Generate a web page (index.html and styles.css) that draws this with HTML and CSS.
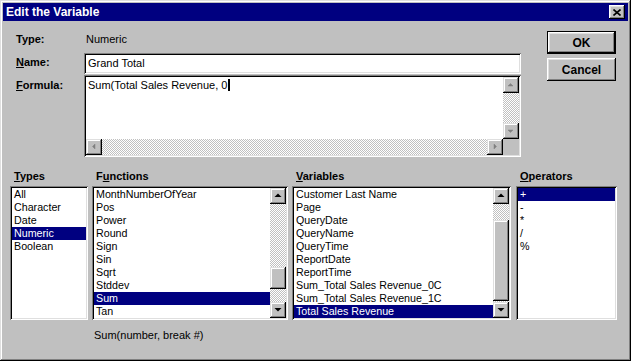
FILE: index.html
```html
<!DOCTYPE html>
<html lang="en">
<head>
	<meta charset="UTF-8">
	<title>Edit the Variable</title>
	<link rel="stylesheet" href="styles.css">
</head>
<body>
	<div class="window">
		<div class="titlebar">
			<span class="title">Edit the Variable</span>
			<span class="close">
				<svg width="8" height="7" viewBox="0 0 8 7"><path d="M0.5 0.5 L7.5 6.5 M7.5 0.5 L0.5 6.5" stroke="#000" stroke-width="1.6" fill="none"/></svg>
			</span>
		</div>

		<div class="top">
			<div class="fields">
				<div class="row type-row">
					<span class="label">Type:</span>
					<span class="value">Numeric</span>
				</div>
				<div class="row name-row">
					<span class="label"><u>N</u>ame:</span>
					<div class="sunken name-field">Grand Total</div>
				</div>
				<div class="row formula-row">
					<span class="label"><u>F</u>ormula:</span>
					<div class="sunken formula-field">
						<div class="formula-body">
							<div class="formula-text">Sum(Total Sales Revenue, 0<span class="caret"></span></div>
							<div class="vscroll">
								<span class="arrow raised"><svg width="16" height="16"><polygon points="5,9 10,9 7.5,6.5" class="dis"/></svg></span>
								<span class="track"></span>
								<span class="arrow raised"><svg width="16" height="16"><polygon points="5,7 10,7 7.5,9.5" class="dis"/></svg></span>
							</div>
						</div>
						<div class="hscroll">
							<span class="arrow raised"><svg width="16" height="16"><polygon points="9,5 9,10 6.5,7.5" class="dis"/></svg></span>
							<span class="track"></span>
							<span class="arrow raised"><svg width="16" height="16"><polygon points="7,5 7,10 9.5,7.5" class="dis"/></svg></span>
							<span class="corner"></span>
						</div>
					</div>
				</div>
			</div>
			<div class="buttons">
				<span class="btn default">OK</span>
				<span class="btn">Cancel</span>
			</div>
		</div>

		<div class="lists">
			<div class="col col-types">
				<div class="col-head"><u>T</u>ypes</div>
				<div class="sunken listbox">
					<ul class="items">
						<li>All</li>
						<li>Character</li>
						<li>Date</li>
						<li class="sel">Numeric</li>
						<li>Boolean</li>
					</ul>
				</div>
			</div>
			<div class="col col-functions">
				<div class="col-head">F<u>u</u>nctions</div>
				<div class="sunken listbox">
					<ul class="items">
						<li>MonthNumberOfYear</li>
						<li>Pos</li>
						<li>Power</li>
						<li>Round</li>
						<li>Sign</li>
						<li>Sin</li>
						<li>Sqrt</li>
						<li>Stddev</li>
						<li class="sel">Sum</li>
						<li>Tan</li>
					</ul>
					<div class="vscroll">
						<span class="arrow raised"><svg width="16" height="16"><polygon points="4.5,9 11.5,9 8,5.5"/></svg></span>
						<span class="track">
							<span class="thumb raised fn-thumb"></span>
						</span>
						<span class="arrow raised"><svg width="16" height="16"><polygon points="4.5,6 11.5,6 8,9.5"/></svg></span>
					</div>
				</div>
			</div>
			<div class="col col-variables">
				<div class="col-head"><u>V</u>ariables</div>
				<div class="sunken listbox">
					<ul class="items">
						<li>Customer Last Name</li>
						<li>Page</li>
						<li>QueryDate</li>
						<li>QueryName</li>
						<li>QueryTime</li>
						<li>ReportDate</li>
						<li>ReportTime</li>
						<li>Sum_Total Sales Revenue_0C</li>
						<li>Sum_Total Sales Revenue_1C</li>
						<li class="sel">Total Sales Revenue</li>
					</ul>
					<div class="vscroll">
						<span class="arrow raised"><svg width="16" height="16"><polygon points="4.5,9 11.5,9 8,5.5"/></svg></span>
						<span class="track">
							<span class="thumb raised var-thumb"></span>
						</span>
						<span class="arrow raised"><svg width="16" height="16"><polygon points="4.5,6 11.5,6 8,9.5"/></svg></span>
					</div>
				</div>
			</div>
			<div class="col col-operators">
				<div class="col-head"><u>O</u>perators</div>
				<div class="sunken listbox">
					<ul class="items">
						<li class="sel">+</li>
						<li>-</li>
						<li>*</li>
						<li>/</li>
						<li>%</li>
					</ul>
				</div>
			</div>
		</div>

		<p class="hint">Sum(number, break #)</p>
	</div>
</body>
</html>
```

FILE: styles.css
```css
html, body, p, ul, li {
	margin: 0;
	padding: 0;
}

body {
	font-size: 11px;
	font-family: "Liberation Sans", Arial, sans-serif;
	color: #000;
	background: #c0c0c0;
}

ul {
	list-style: none;
}

u {
	text-decoration-thickness: 1px;
	text-underline-offset: 1px;
}

.window {
	width: 631px;
	height: 361px;
	box-sizing: border-box;
	padding: 3px;
	background: #c0c0c0;
	box-shadow: inset -1px -1px #000, inset 1px 1px #dfdfdf, inset -2px -2px #808080, inset 2px 2px #fff;
}

/* borders */
.raised {
	box-sizing: border-box;
	background: #c0c0c0;
	box-shadow: inset -1px -1px #000, inset 1px 1px #dfdfdf, inset -2px -2px #808080, inset 2px 2px #fff;
}

.sunken {
	box-sizing: border-box;
	padding: 2px;
	background: #fff;
	box-shadow: inset 1px 1px #808080, inset -1px -1px #fff, inset 2px 2px #000, inset -2px -2px #dfdfdf;
}

/* title bar */
.titlebar {
	height: 18px;
	display: flex;
	align-items: center;
	justify-content: space-between;
	padding-left: 3px;
	padding-right: 3px;
	background: #000080;
}

.titlebar .title {
	color: #fff;
	font-weight: bold;
	font-size: 12px;
}

.titlebar .close {
	width: 16px;
	height: 14px;
	display: flex;
	align-items: center;
	justify-content: center;
	box-sizing: border-box;
	background: #c0c0c0;
	box-shadow: inset -1px -1px #000, inset 1px 1px #fff, inset -2px -2px #808080, inset 2px 2px #dfdfdf;
}

/* top part */
.top {
	display: flex;
	margin-top: 10px;
	padding-left: 13px;
}

.fields {
	width: 505px;
}

.row {
	display: flex;
}

.label {
	width: 68px;
	flex: none;
	font-weight: bold;
}

.type-row {
	height: 16px;
	line-height: 16px;
}

.type-row .value {
	padding-left: 2px;
}

.name-row {
	margin-top: 6px;
	height: 21px;
}

.name-row .label {
	line-height: 18px;
}

.name-field {
	width: 437px;
	height: 21px;
	padding-left: 4px;
	line-height: 17px;
}

.formula-row {
	margin-top: 1px;
	height: 82px;
}

.formula-row .label {
	padding-top: 3px;
	line-height: 14px;
}

.formula-field {
	width: 437px;
	height: 82px;
	display: flex;
	flex-direction: column;
}

.formula-body {
	flex: 1;
	display: flex;
}

.formula-text {
	flex: 1;
	padding-left: 2px;
	padding-top: 1px;
	line-height: 14px;
}

.caret {
	display: inline-block;
	width: 2px;
	height: 12px;
	margin-left: 1px;
	vertical-align: -2px;
	background: #000;
}

.formula-field .vscroll {
	width: 16px;
}

.hscroll {
	height: 16px;
	display: flex;
}

.hscroll .track {
	flex: 1;
}

.hscroll .corner {
	width: 16px;
	background: #c0c0c0;
}

/* scrollbars */
.vscroll {
	width: 16px;
	flex: none;
	display: flex;
	flex-direction: column;
}

.vscroll .track {
	flex: 1;
}

.track {
	background: repeating-conic-gradient(#c0c0c0 0% 25%, #fff 0% 50%) 0 0 / 2px 2px;
}

.arrow {
	width: 16px;
	height: 16px;
	flex: none;
	display: block;
}

.arrow svg {
	display: block;
}

.arrow polygon {
	fill: #000;
}

.arrow polygon.dis {
	fill: #808080;
	stroke: #808080;
	stroke-width: 0.5;
}

.thumb {
	display: block;
	width: 16px;
}

.fn-thumb {
	margin-top: 63px;
	height: 22px;
}

.var-thumb {
	margin-top: 16px;
	height: 81px;
}

/* buttons */
.buttons {
	margin-left: 26px;
	display: flex;
	flex-direction: column;
	gap: 4px;
}

.btn {
	display: flex;
	align-items: center;
	justify-content: center;
	width: 69px;
	height: 23px;
	box-sizing: border-box;
	font-weight: bold;
	font-size: 12px;
	background: #c0c0c0;
	box-shadow: inset -1px -1px #000, inset 1px 1px #fff, inset -2px -2px #808080, inset 2px 2px #dfdfdf;
}

.btn.default {
	border: 1px solid #000;
}

/* lists */
.lists {
	display: flex;
	margin-top: 13px;
	padding-left: 7px;
}

.col-head {
	height: 16px;
	line-height: 13px;
	padding-left: 4px;
	font-weight: bold;
}

.col-types { width: 78px; }
.col-functions { width: 196px; margin-left: 4px; }
.col-variables { width: 219px; margin-left: 4px; }
.col-operators { width: 101px; margin-left: 5px; }

.listbox {
	height: 134px;
	display: flex;
}

.items {
	flex: 1;
	overflow: hidden;
	font-size: 10.7px;
}

.items li {
	height: 13px;
	line-height: 13px;
	padding-left: 2px;
	white-space: nowrap;
}

.items li.sel {
	background: #000080;
	color: #fff;
}

.hint {
	margin-top: 8px;
	padding-left: 91px;
	line-height: 14px;
}
```
